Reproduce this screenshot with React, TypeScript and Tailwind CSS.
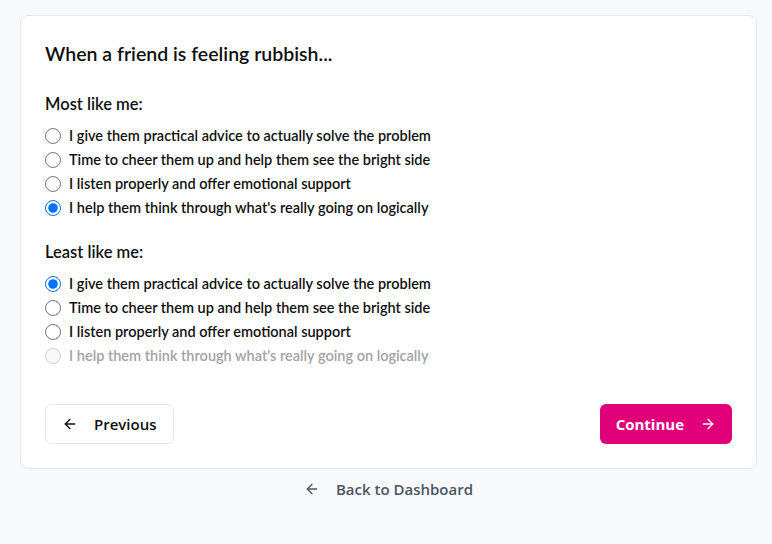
import React, { useState } from 'react';
import { ArrowLeft, ArrowRight } from 'lucide-react';

const options = [
  "I give them practical advice to actually solve the problem",
  "Time to cheer them up and help them see the bright side",
  "I listen properly and offer emotional support",
  "I help them think through what's really going on logically",
];

const RadioGroup: React.FC<{
  name: string;
  label: string;
  value: number;
  disabledIndex: number;
  onChange: (i: number) => void;
}> = ({ name, label, value, disabledIndex, onChange }) => (
  <div>
    <p className="text-[16.5px] leading-6 font-semibold text-[#111] mb-2">{label}</p>
    <div className="flex flex-col">
      {options.map((opt, i) => {
        const disabled = i === disabledIndex;
        return (
          <label key={i} className="flex items-center gap-2 h-6">
            <input
              type="radio"
              name={name}
              className="w-4 h-4 m-0"
              checked={value === i}
              disabled={disabled}
              onChange={() => onChange(i)}
            />
            <span className={`text-[14.5px] font-semibold ${disabled ? 'text-[#a3a3a3]' : 'text-[#111]'}`}>
              {opt}
            </span>
          </label>
        );
      })}
    </div>
  </div>
);

export default function App() {
  const [most, setMost] = useState(3);
  const [least, setLeast] = useState(0);

  return (
    <div className="min-h-screen bg-[#f8f9fb] pt-[15px] pl-5" style={{ fontFamily: 'Lato, "Open Sans", sans-serif' }}>
      <div className="w-[737px] bg-white border border-[#e5e7eb] rounded-lg px-6 pt-6 pb-6">
        <h1 className="text-[19.5px] leading-7 font-semibold text-[#111] mb-6">When a friend is feeling rubbish...</h1>
        <RadioGroup name="most" label="Most like me:" value={most} disabledIndex={-1} onChange={setMost} />
        <div className="mt-5">
          <RadioGroup name="least" label="Least like me:" value={least} disabledIndex={most} onChange={setLeast} />
        </div>
        <div className="flex justify-between mt-9" style={{ fontFamily: '"Open Sans", sans-serif' }}>
          <button className="flex items-center h-10 px-4 gap-4 bg-white border border-[#e5e7eb] rounded-md text-[15px] font-semibold text-[#111]">
            <ArrowLeft className="w-4 h-4" />
            Previous
          </button>
          <button className="flex items-center h-10 pl-4 pr-4 gap-4 bg-[#e2007a] rounded-md text-[15px] font-bold text-white">
            Continue
            <ArrowRight className="w-4 h-4" />
          </button>
        </div>
      </div>
      <div className="w-[737px] flex justify-center mt-[10px]" style={{ fontFamily: '"Open Sans", sans-serif' }}>
        <button className="flex items-center gap-4 h-5 text-[15px] font-semibold text-[#4b5563]">
          <ArrowLeft className="w-4 h-4" />
          Back to Dashboard
        </button>
      </div>
    </div>
  );
}
